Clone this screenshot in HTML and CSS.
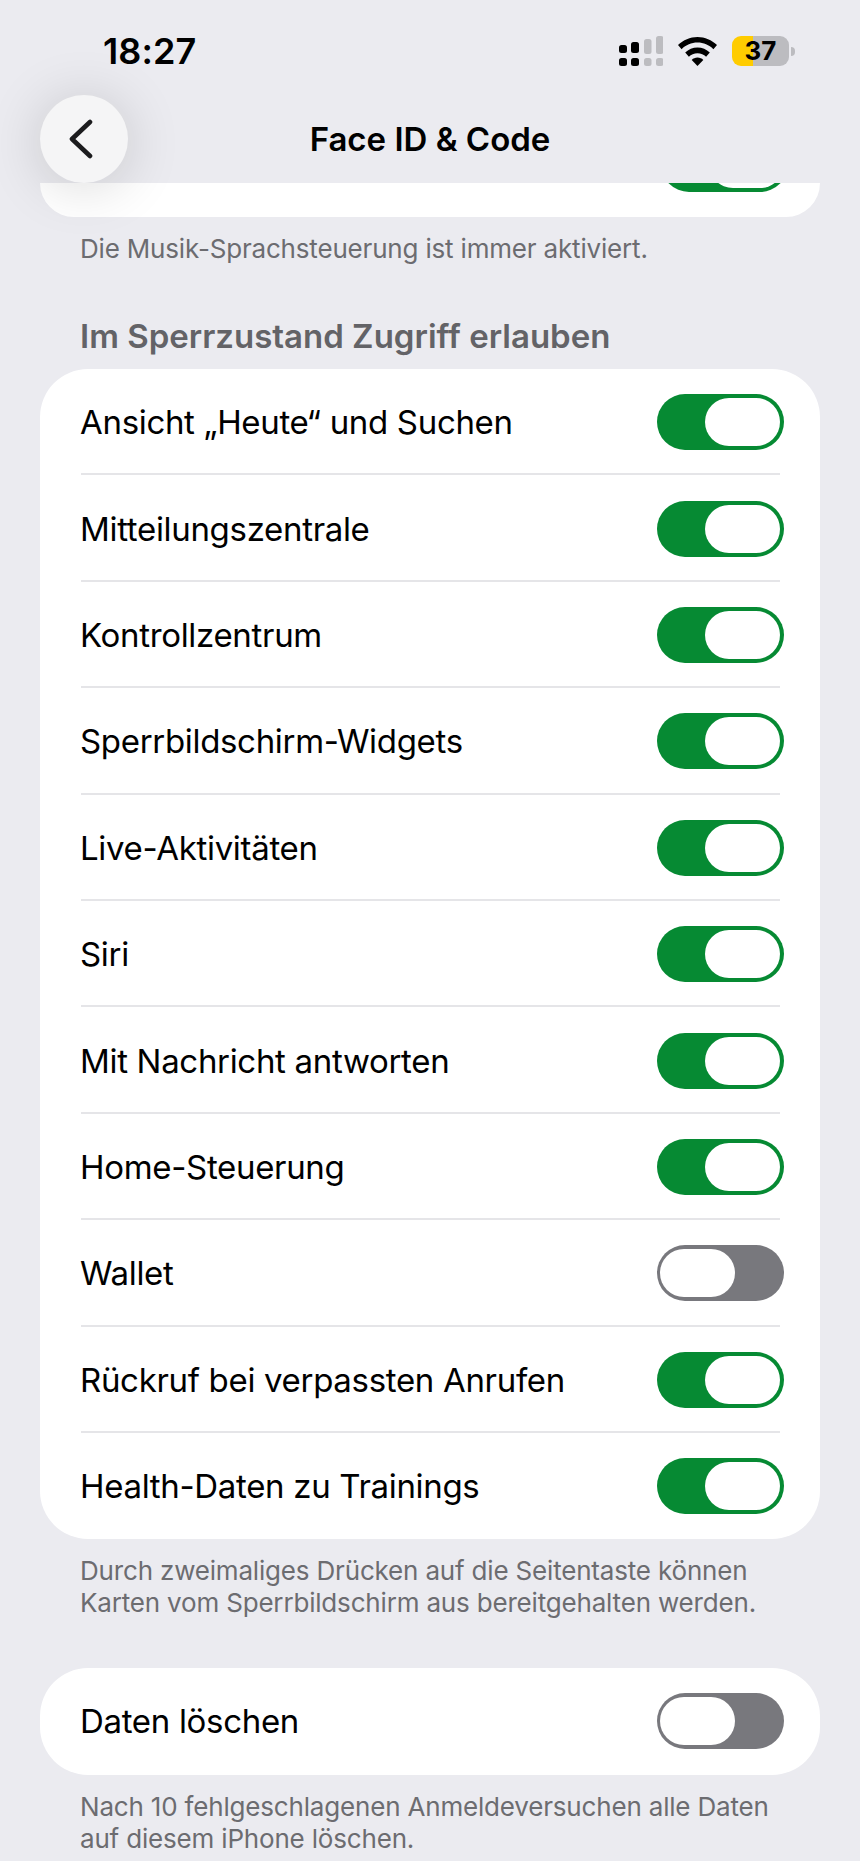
FILE: index.html
```html
<!DOCTYPE html>
<html lang="de">
<head>
    <meta charset="UTF-8">
    <meta name="viewport" content="width=device-width, initial-scale=1.0">
    <link rel="stylesheet" href="styles.css">
    <title>Face ID &amp; Code</title>
</head>
<body>
    <div class="screen">
        <header class="top-bar">
            <div class="status-bar">
                <span class="time">18:27</span>
                <div class="status-icons">
                    <svg class="signal" width="44" height="30" viewBox="0 0 44 30">
                        <rect x="0" y="9" width="8" height="8" rx="2.5" fill="#000"/>
                        <rect x="0" y="22" width="8" height="8" rx="2.5" fill="#000"/>
                        <rect x="12" y="6" width="8" height="11" rx="2.5" fill="#000"/>
                        <rect x="12" y="22" width="8" height="8" rx="2.5" fill="#000"/>
                        <rect x="25" y="3" width="7.5" height="15" rx="2.5" fill="#bcbcc0"/>
                        <rect x="25" y="22" width="7.5" height="8" rx="2.5" fill="#bcbcc0"/>
                        <rect x="37" y="0" width="7.5" height="18" rx="2.5" fill="#bcbcc0"/>
                        <rect x="37" y="22" width="7.5" height="8" rx="2.5" fill="#bcbcc0"/>
                    </svg>
                    <svg class="wifi" width="39" height="29" viewBox="0 0 39 29">
                        <path d="M19.5 0C12 0 5.3 3 0 8l3.6 4.2C8 8 13.4 5.6 19.5 5.6S31 8 35.4 12.2L39 8C33.7 3 27 0 19.5 0z" fill="#000"/>
                        <path d="M19.5 10.6c-4.7 0-9 1.9-12.3 5l3.7 4.2c2.2-2.1 5.2-3.5 8.6-3.5s6.400 1.400 8.600 3.500l3.700-4.200c-3.300-3.100-7.600-5-12.300-5z" fill="#000"/>
                        <path d="M19.500 20.600c-2.300 0-4.300 .9-5.800 2.300l5.800 6.100 5.800-6.100c-1.500-1.400-3.500-2.300-5.800-2.300z" fill="#000"/>
                    </svg>
                    <div class="battery">
                        <div class="battery-body">37</div>
                        <div class="battery-cap"></div>
                    </div>
                </div>
            </div>
            <nav class="nav-bar">
                <button class="back-button">
                    <svg width="26" height="40" viewBox="0 0 26 40">
                        <path d="M22 3 L4 20 L22 37" fill="none" stroke="#1c1c1e" stroke-width="4.600" stroke-linecap="round" stroke-linejoin="round"/>
                    </svg>
                </button>
                <h1>Face ID &amp; Code</h1>
            </nav>
        </header>

        <main>
            <div class="card card-cut">
                <div class="toggle on"><span class="knob"></span></div>
            </div>
            <p class="note">Die Musik-Sprachsteuerung ist immer aktiviert.</p>

            <h2>Im Sperrzustand Zugriff erlauben</h2>
            <ul class="card">
                <li class="row"><span>Ansicht „Heute“ und Suchen</span><div class="toggle on"><span class="knob"></span></div></li>
                <li class="row"><span>Mitteilungszentrale</span><div class="toggle on"><span class="knob"></span></div></li>
                <li class="row"><span>Kontrollzentrum</span><div class="toggle on"><span class="knob"></span></div></li>
                <li class="row"><span>Sperrbildschirm-Widgets</span><div class="toggle on"><span class="knob"></span></div></li>
                <li class="row"><span>Live-Aktivitäten</span><div class="toggle on"><span class="knob"></span></div></li>
                <li class="row"><span>Siri</span><div class="toggle on"><span class="knob"></span></div></li>
                <li class="row"><span>Mit Nachricht antworten</span><div class="toggle on"><span class="knob"></span></div></li>
                <li class="row"><span>Home-Steuerung</span><div class="toggle on"><span class="knob"></span></div></li>
                <li class="row"><span>Wallet</span><div class="toggle"><span class="knob"></span></div></li>
                <li class="row"><span>Rückruf bei verpassten Anrufen</span><div class="toggle on"><span class="knob"></span></div></li>
                <li class="row"><span>Health-Daten zu Trainings</span><div class="toggle on"><span class="knob"></span></div></li>
            </ul>
            <p class="note">Durch zweimaliges Drücken auf die Seitentaste können<br>Karten vom Sperrbildschirm aus bereitgehalten werden.</p>

            <ul class="card card-single">
                <li class="row"><span>Daten löschen</span><div class="toggle"><span class="knob"></span></div></li>
            </ul>
            <p class="note">Nach 10 fehlgeschlagenen Anmeldeversuchen alle Daten<br>auf diesem iPhone löschen.</p>
        </main>
    </div>
</body>
</html>
```

FILE: styles.css
```css
* {
    box-sizing: border-box;
}

body {
    margin: 0;
    padding: 0;
    background-color: #ebebf0;
    font-family: Inter, "Noto Sans", sans-serif;
    color: #000;
}

.screen {
    width: 860px;
    height: 1861px;
    overflow: hidden;
}

.status-bar {
    display: flex;
    justify-content: space-between;
    align-items: center;
    height: 95px;
    padding: 7px 65px 0 103px;
}

.time {
    font-size: 36px;
    font-weight: 600;
    letter-spacing: 0.1px;
}

.status-icons {
    display: flex;
    align-items: center;
}

.signal {
    margin-right: 15px;
}

.wifi {
    margin-right: 15px;
}

.battery {
    display: flex;
    align-items: center;
}

.battery-body {
    width: 57px;
    height: 30px;
    border-radius: 9px;
    background: linear-gradient(to right, #ffcc00 37%, #bcbcc0 37%);
    font-size: 26px;
    font-weight: 700;
    line-height: 30px;
    text-align: center;
}

.battery-cap {
    width: 4px;
    height: 9px;
    margin-left: 2px;
    border-radius: 0 4px 4px 0;
    background-color: #bcbcc0;
}

.nav-bar {
    position: relative;
    display: flex;
    justify-content: center;
    align-items: center;
    height: 88px;
}

.nav-bar h1 {
    margin: 0;
    font-size: 33px;
    font-weight: 600;
}

.back-button {
    position: absolute;
    left: 40px;
    top: 0;
    z-index: 2;
    display: flex;
    justify-content: center;
    align-items: center;
    width: 88px;
    height: 88px;
    padding: 0 6px 0 0;
    border: none;
    border-radius: 50%;
    background-color: #f5f5f6;
    box-shadow: 0 4px 56px rgba(0, 0, 0, 0.16);
}

main {
    padding: 0 40px;
}

.card {
    margin: 0;
    padding: 0;
    list-style-type: none;
    background-color: white;
    border-radius: 48px;
}

.card-cut {
    display: flex;
    justify-content: flex-end;
    align-items: flex-end;
    height: 34px;
    padding: 0 36px 25px 0;
    overflow: hidden;
    border-radius: 0 0 50px 50px;
}

.card-single {
    margin-top: 49px;
}

.row {
    display: flex;
    justify-content: space-between;
    align-items: center;
    height: 106.4px;
    margin: 0 40px 0 41px;
    padding-top: 2px;
    border-bottom: 2px solid #e5e5e8;
    font-size: 33px;
    letter-spacing: -0.32px;
}

.row span:first-child {
    margin-left: -1px;
}

.row:last-child {
    padding-top: 0;
    border-bottom: none;
}

.toggle {
    display: flex;
    flex: none;
    justify-content: flex-start;
    width: 127px;
    height: 56px;
    margin-right: -4px;
    padding: 4px;
    border-radius: 28px;
    background-color: #78787d;
}

.toggle.on {
    justify-content: flex-end;
    background-color: #068a33;
}

.knob {
    width: 75px;
    height: 48px;
    border-radius: 24px;
    background-color: white;
}

.note {
    margin: 0;
    padding: 16px 40px 0;
    font-size: 26px;
    letter-spacing: -0.18px;
    line-height: 32px;
    color: #6c6c70;
}

h2 {
    margin: 51px 0 0;
    padding: 0 40px 13px;
    font-size: 33px;
    font-weight: 600;
    line-height: 40px;
    color: #636367;
}
```
